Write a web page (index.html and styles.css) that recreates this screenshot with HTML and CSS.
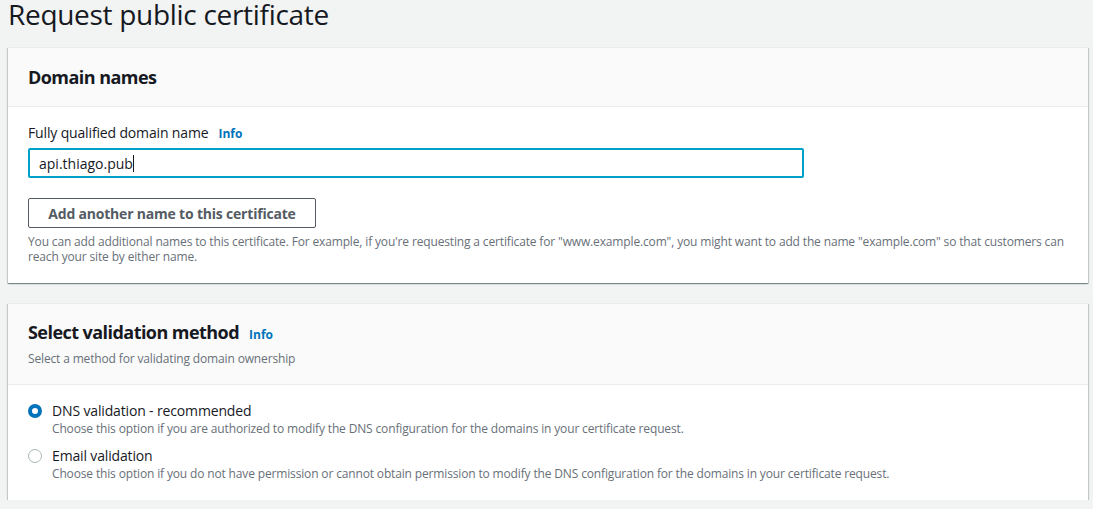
FILE: index.html
```html
<!DOCTYPE html>
<html>
<head>
<meta charset="utf-8">
<link rel="stylesheet" href="styles.css">
</head>
<body>
<div class="page">
  <h1 class="title">Request public certificate</h1>

  <section class="card">
    <div class="card-header">
      <h2 class="card-title">Domain names</h2>
    </div>
    <div class="card-body">
      <div class="label-row">
        <span class="label">Fully qualified domain name</span>
        <a class="info">Info</a>
      </div>
      <div class="input"><span class="input-text">api.thiago.pub</span><span class="caret"></span></div>
      <button class="btn">Add another name to this certificate</button>
      <p class="help">You can add additional names to this certificate. For example, if you're requesting a certificate for "www.example.com", you might want to add the name "example.com" so that customers can reach your site by either name.</p>
    </div>
  </section>

  <section class="card card-2">
    <div class="card-header header-2">
      <div class="label-row">
        <h2 class="card-title">Select validation method</h2>
        <a class="info">Info</a>
      </div>
      <p class="subtitle">Select a method for validating domain ownership</p>
    </div>
    <div class="card-body body-2">
      <div class="radio-row">
        <span class="radio checked"></span>
        <div class="radio-text">
          <div class="radio-label">DNS validation - recommended</div>
          <div class="radio-desc">Choose this option if you are authorized to modify the DNS configuration for the domains in your certificate request.</div>
        </div>
      </div>
      <div class="radio-row">
        <span class="radio"></span>
        <div class="radio-text">
          <div class="radio-label">Email validation</div>
          <div class="radio-desc">Choose this option if you do not have permission or cannot obtain permission to modify the DNS configuration for the domains in your certificate request.</div>
        </div>
      </div>
    </div>
  </section>
</div>
</body>
</html>
```

FILE: styles.css
```css
html, body {
  margin: 0;
  padding: 0;
  background: #f2f3f3;
  font-family: "Open Sans", "Noto Sans", sans-serif;
  color: #16191f;
  letter-spacing: -0.15px;
}
.page {
  padding: 0 5px 0 8px;
}
.title {
  margin: 0;
  font-size: 28px;
  font-weight: 400;
  line-height: 28px;
  height: 47px;
  letter-spacing: -0.3px;
  box-sizing: border-box;
}
.card {
  background: #fff;
  box-shadow: 0 1px 1px 0 rgba(0,28,36,0.3), 1px 1px 1px 0 rgba(0,28,36,0.15), -1px 1px 1px 0 rgba(0,28,36,0.15);
  border-top: 1px solid #eaeded;
}
.card-header {
  background: #fafafa;
  border-bottom: 1px solid #eaeded;
  height: 58px;
  padding: 0 20px;
  display: flex;
  align-items: center;
}
.card-title {
  margin: 0;
  font-size: 18px;
  font-weight: 700;
  line-height: 22px;
  letter-spacing: -0.55px;
}
.card-body {
  padding: 16px 20px 19px;
}
.label-row {
  display: flex;
  align-items: baseline;
  gap: 10px;
}
.label {
  font-size: 14px;
  line-height: 20px;
}
.info {
  font-size: 12px;
  font-weight: 700;
  color: #0073bb;
  letter-spacing: 0;
}
.input {
  margin-top: 5px;
  width: 776px;
  height: 30px;
  box-sizing: border-box;
  border: 2px solid #00a1c9;
  border-radius: 2px;
  padding: 0 9px;
  display: flex;
  align-items: center;
  font-size: 14px;
  letter-spacing: 0;
}
.caret {
  display: inline-block;
  width: 1px;
  height: 17px;
  background: #16191f;
}
.btn {
  margin-top: 20px;
  display: block;
  width: 288px;
  height: 30px;
  background: #fff;
  border: 1px solid #545b64;
  border-radius: 2px;
  font-family: inherit;
  font-size: 14px;
  font-weight: 700;
  color: #545b64;
  letter-spacing: -0.2px;
  padding: 0;
}
.help {
  margin: 6px 0 0;
  font-size: 12px;
  line-height: 15px;
  color: #687078;
}
.card-2 {
  margin-top: 20px;
}
.header-2 {
  height: 80px;
  flex-direction: column;
  align-items: flex-start;
  justify-content: center;
}
.header-2 .label-row {
  margin-top: -2px;
}
.subtitle {
  margin: 8px 0 0;
  font-size: 12px;
  line-height: 15px;
  color: #687078;
}
.body-2 {
  padding: 16px 20px 18px;
}
.radio-row {
  display: flex;
  gap: 10px;
  margin-bottom: 9px;
}
.radio-row:last-child {
  margin-bottom: 0;
}
.radio {
  margin-top: 3px;
  width: 14px;
  height: 14px;
  box-sizing: border-box;
  border-radius: 50%;
  border: 1.5px solid #aab7b8;
  background: #fff;
  flex: none;
}
.radio.checked {
  border: 4px solid #0073bb;
}
.radio-label {
  font-size: 14px;
  line-height: 20px;
}
.radio-desc {
  font-size: 12px;
  line-height: 16px;
  color: #687078;
}
```
